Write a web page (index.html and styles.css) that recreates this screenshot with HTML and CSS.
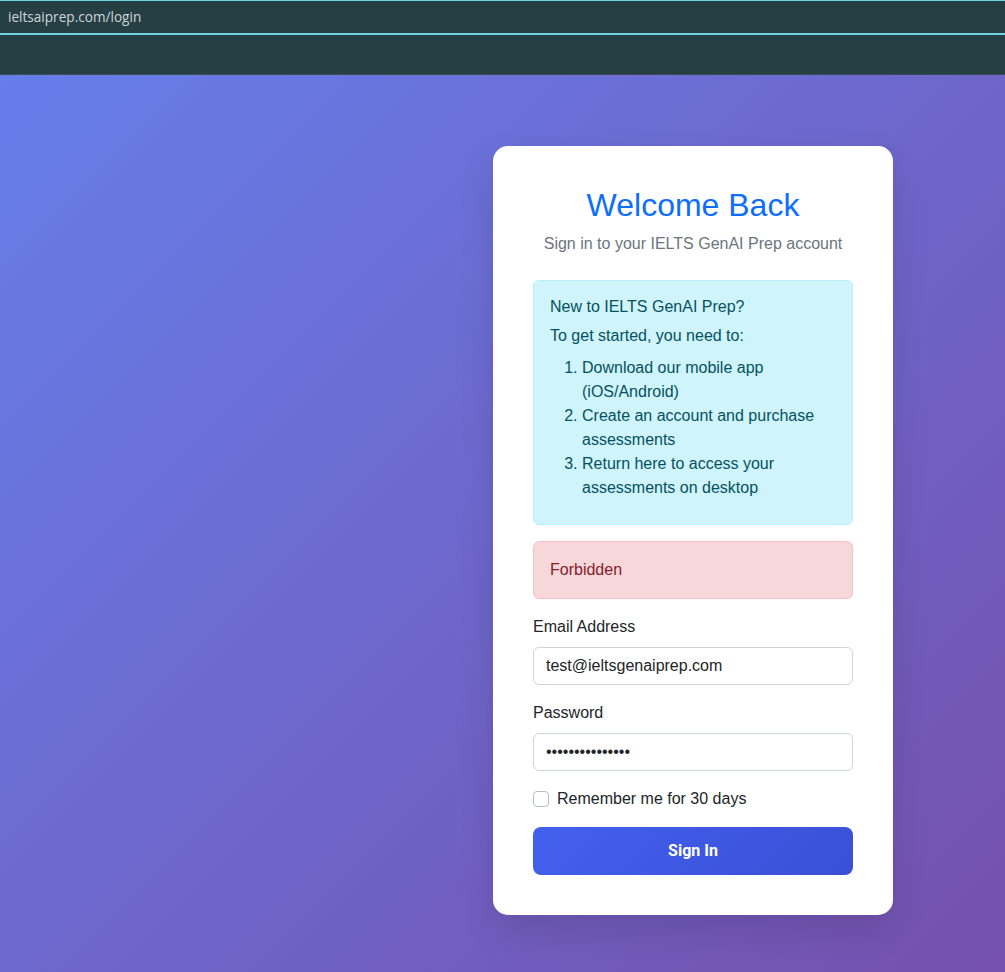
FILE: index.html
```html
<!DOCTYPE html>
<html lang="en">
<head>
<meta charset="utf-8">
<title>Login - IELTS GenAI Prep</title>
<link rel="stylesheet" href="styles.css">
</head>
<body>
<header class="chrome">
  <div class="urlbar"><span class="url">ieltsaiprep.com/login</span></div>
  <div class="toolbar"></div>
</header>
<main class="stage">
  <section class="card">
    <h2 class="title">Welcome Back</h2>
    <p class="subtitle">Sign in to your IELTS GenAI Prep account</p>

    <div class="alert alert-info">
      <h6 class="info-head">New to IELTS GenAI Prep?</h6>
      <p class="info-text">To get started, you need to:</p>
      <ol class="steps">
        <li>Download our mobile app (iOS/Android)</li>
        <li>Create an account and purchase assessments</li>
        <li>Return here to access your assessments on desktop</li>
      </ol>
    </div>

    <div class="alert alert-danger">Forbidden</div>

    <form class="form">
      <div class="field">
        <label class="label" for="email">Email Address</label>
        <input class="input" id="email" type="email" value="test@ieltsgenaiprep.com">
      </div>
      <div class="field">
        <label class="label" for="password">Password</label>
        <input class="input" id="password" type="password" value="testpassword123">
      </div>
      <div class="check">
        <span class="box"></span>
        <span class="check-label">Remember me for 30 days</span>
      </div>
      <button class="btn" type="button">Sign In</button>
    </form>
  </section>
</main>
</body>
</html>
```
FILE: styles.css
```css
* { box-sizing: border-box; }
html, body { margin: 0; padding: 0; }
body {
  width: 1005px;
  height: 972px;
  overflow: hidden;
  font-family: "Liberation Sans", Arial, sans-serif;
  font-size: 16px;
  line-height: 1.5;
  color: #212529;
  display: flex;
  flex-direction: column;
}
.chrome { background: #263f45; flex: none; }
.urlbar {
  height: 35px;
  border-top: 1px solid #6fd3df;
  border-bottom: 2px solid #6fd3df;
  display: flex;
  align-items: center;
  padding-left: 8px;
}
.url {
  font-family: "Open Sans", "Noto Sans", sans-serif;
  font-size: 13.6px;
  color: #cdd6d6;
}
.toolbar {
  height: 40px;
  border-bottom: 1px solid #3b4c50;
}
.stage {
  flex: 1;
  background: linear-gradient(135deg, #667eea 0%, #7550ad 100%);
  padding: 71px 0 0 493px;
}
.card {
  width: 400px;
  background: #fff;
  border-radius: 15px;
  padding: 40px;
  box-shadow: 0 15px 35px rgba(0,0,0,0.12);
}
.title {
  margin: 0 0 8px;
  text-align: center;
  font-size: 32px;
  font-weight: 400;
  line-height: 1.2;
  color: #0d6efd;
}
.subtitle {
  margin: 0 0 24px;
  text-align: center;
  color: #6c757d;
}
.alert {
  border: 1px solid transparent;
  border-radius: 6px;
  padding: 16px;
  margin-bottom: 16px;
}
.alert-info {
  background: #cff4fc;
  border-color: #b6effb;
  color: #055160;
}
.alert-danger {
  background: #f8d7da;
  border-color: #f5c2c7;
  color: #842029;
}
.info-head {
  margin: 0 0 7px;
  font-size: 16px;
  font-weight: 400;
  line-height: 1.2;
}
.info-text { margin: 0 0 8px; }
.steps {
  margin: 0 0 8px;
  padding-left: 32px;
}
.form { margin: 0; }
.field { margin-bottom: 16px; }
.label {
  display: block;
  margin-bottom: 8px;
  color: #212529;
}
.input {
  display: block;
  width: 100%;
  height: 38px;
  padding: 6px 12px;
  font-family: inherit;
  font-size: 16px;
  line-height: 1.5;
  color: #212529;
  background: #fff;
  border: 1px solid #ced4da;
  border-radius: 6px;
  outline: none;
}
.check {
  display: flex;
  align-items: center;
  height: 24px;
  margin-bottom: 16px;
}
.box {
  width: 16px;
  height: 16px;
  border: 1px solid #b9bec4;
  border-radius: 4px;
  background: #fff;
  margin-right: 8px;
  flex: none;
}
.check-label { color: #212529; }
.btn {
  display: block;
  width: 100%;
  height: 48px;
  border: 0;
  border-radius: 8px;
  background: linear-gradient(135deg, #4361ee 0%, #3a4fd6 100%);
  color: #fff;
  font-family: Roboto, "Liberation Sans", sans-serif;
  font-weight: 700;
  font-size: 16px;
  cursor: pointer;
}
```
